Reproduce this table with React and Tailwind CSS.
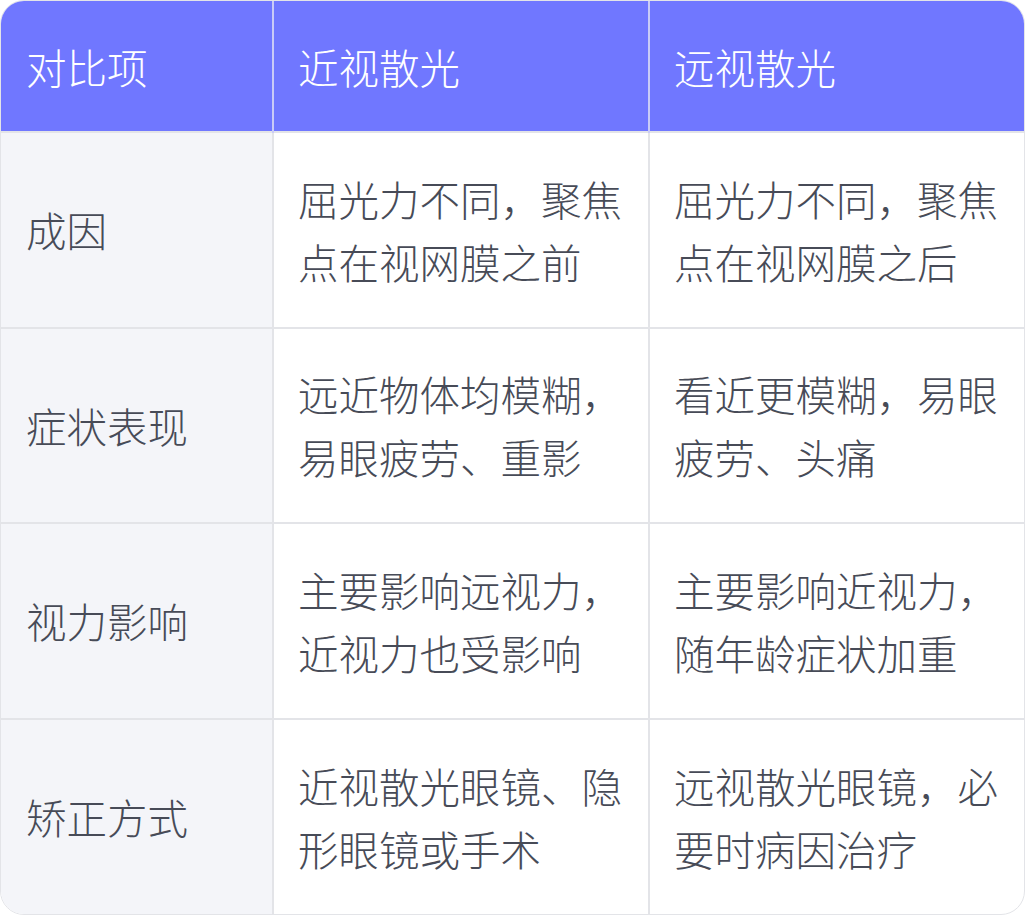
import React from 'react';

const rows = [
  { item: '成因', near: '屈光力不同，聚焦点在视网膜之前', far: '屈光力不同，聚焦点在视网膜之后' },
  { item: '症状表现', near: '远近物体均模糊，易眼疲劳、重影', far: '看近更模糊，易眼疲劳、头痛' },
  { item: '视力影响', near: '主要影响远视力，近视力也受影响', far: '主要影响近视力，随年龄症状加重' },
  { item: '矫正方式', near: '近视散光眼镜、隐形眼镜或手术', far: '远视散光眼镜，必要时病因治疗' },
];

export default function App() {
  return (
    <div className="w-[1025px] bg-white" style={{ fontFamily: '"Noto Sans CJK SC", "Noto Sans", sans-serif' }}>
      <div className="overflow-hidden rounded-[24px] border border-[#e3e4e8]">
        <table className="w-full border-collapse table-fixed text-[40.5px] leading-[63px] font-light">
          <colgroup>
            <col className="w-[272px]" />
            <col className="w-[376px]" />
            <col />
          </colgroup>
          <thead>
            <tr className="bg-[#7077ff] text-white">
              <th className="h-[131px] px-[25px] text-left font-light">对比项</th>
              <th className="px-[24px] text-left font-light border-l-2 border-[#c9cbf7]">近视散光</th>
              <th className="px-[24px] text-left font-light border-l-2 border-[#c9cbf7]">远视散光</th>
            </tr>
          </thead>
          <tbody className="text-[#474b57]">
            {rows.map((r) => (
              <tr key={r.item} className="border-t-2 border-[#e3e4e8]">
                <td className="h-[195.5px] px-[25px] bg-[#f4f5f9] align-middle">{r.item}</td>
                <td className="px-[24px] align-middle border-l-2 border-[#e3e4e8]">{r.near}</td>
                <td className="px-[24px] align-middle border-l-2 border-[#e3e4e8]">{r.far}</td>
              </tr>
            ))}
          </tbody>
        </table>
      </div>
    </div>
  );
}
